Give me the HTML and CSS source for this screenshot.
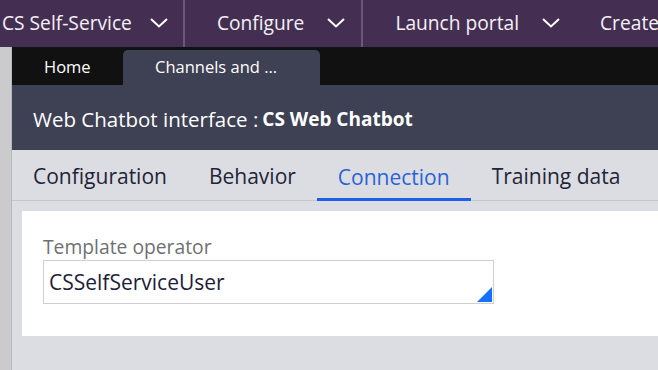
FILE: index.html
```html
<!DOCTYPE html>
<html lang="en">
<head>
    <meta charset="UTF-8">
    <title>Web Chatbot interface</title>
    <link rel="stylesheet" href="styles.css">
</head>
<body>
    <div class="topbar">
        <div class="menu-item first has-sep">
            <span class="menu-label">CS Self-Service</span>
            <svg class="chevron" viewBox="0 0 18 10" width="18" height="10"><path d="M1 1 L9 8.5 L17 1" fill="none" stroke="#ffffff" stroke-width="2"/></svg>
        </div>
        <div class="menu-item has-sep">
            <span class="menu-label">Configure</span>
            <svg class="chevron" viewBox="0 0 18 10" width="18" height="10"><path d="M1 1 L9 8.5 L17 1" fill="none" stroke="#ffffff" stroke-width="2"/></svg>
        </div>
        <div class="menu-item">
            <span class="menu-label">Launch portal</span>
            <svg class="chevron" viewBox="0 0 18 10" width="18" height="10"><path d="M1 1 L9 8.5 L17 1" fill="none" stroke="#ffffff" stroke-width="2"/></svg>
        </div>
        <div class="menu-item last">
            <span class="menu-label">Create</span>
        </div>
    </div>

    <div class="main">
        <div class="side-strip"></div>
        <div class="workspace">
            <div class="doc-tabs">
                <div class="doc-tab">Home</div>
                <div class="doc-tab active">Channels and ...</div>
            </div>

            <div class="rule-header">
                <span class="rule-type">Web Chatbot interface :</span>
                <span class="rule-name">CS Web Chatbot</span>
            </div>

            <div class="rule-tabs">
                <div class="rule-tab">Configuration</div>
                <div class="rule-tab">Behavior</div>
                <div class="rule-tab active">Connection</div>
                <div class="rule-tab">Training data</div>
            </div>

            <div class="panel-area">
                <div class="panel">
                    <div class="field-label">Template operator</div>
                    <div class="field-input">
                        CSSelfServiceUser
                        <span class="autocomplete-corner"></span>
                    </div>
                </div>
            </div>
        </div>
    </div>
</body>
</html>
```

FILE: styles.css
```css
:root {
    --purple: #442f52;
    --purple-sep: #6b577a;
    --black-bar: #111111;
    --slate: #3e4053;
    --light-gray: #dcdde2;
    --blue: #1f5ee8;
    --text-dark: #1f2437;
}

* { box-sizing: border-box; }

body {
    margin: 0;
    width: 658px;
    height: 370px;
    overflow: hidden;
    font-family: 'Open Sans', sans-serif;
    background: var(--light-gray);
}

/* --- Top menu bar --- */
.topbar {
    height: 47px;
    background: var(--purple);
    display: flex;
    align-items: stretch;
    white-space: nowrap;
    overflow: hidden;
}
.menu-item {
    display: flex;
    align-items: center;
    gap: 23px;
    padding: 0 16px 3px 32px;
    color: #f4f1f6;
    font-size: 19.2px;
}
.menu-item.first { padding-left: 2px; gap: 18px; padding-right: 15px; }
.menu-item.last { padding-left: 24px; }
.menu-item.has-sep { border-right: 2px solid var(--purple-sep); }
.chevron { display: block; margin-top: 2px; }

/* --- Main --- */
.main { display: flex; height: 323px; }
.side-strip {
    width: 12px;
    flex-shrink: 0;
    background: #cbcbce;
    border-right: 1px solid #b9b9bd;
}
.workspace { flex: 1; display: flex; flex-direction: column; min-width: 0; }

.doc-tabs {
    height: 38px;
    background: var(--black-bar);
    display: flex;
    align-items: flex-end;
}
.doc-tab {
    height: 35px;
    display: flex;
    align-items: center;
    color: #ffffff;
    font-size: 16.5px;
    padding: 0 32px 2px;
    width: 111px;
    white-space: nowrap;
}
.doc-tab.active {
    width: 197px;
    background: var(--slate);
    border-radius: 5px 5px 0 0;
}

.rule-header {
    height: 65px;
    background: var(--slate);
    color: #ffffff;
    display: flex;
    align-items: center;
    padding: 2px 21px 0;
    white-space: nowrap;
}
.rule-type { font-size: 20.5px; }
.rule-name { font-size: 19px; font-weight: 700; margin-left: 4px; }

.rule-tabs {
    height: 51px;
    display: flex;
    border-bottom: 1px solid #c6c7cc;
    white-space: nowrap;
}
.rule-tab {
    display: flex;
    align-items: center;
    padding: 2px 21px 0;
    font-size: 21px;
    color: var(--text-dark);
}
.rule-tab.active {
    color: #2a63d6;
    box-shadow: inset 0 -3px 0 var(--blue);
    margin-bottom: -1px;
}

.panel-area { padding: 10px 0 0 10px; }
.panel {
    background: #ffffff;
    height: 125px;
    padding: 24px 21px 0;
}
.field-label {
    font-size: 19.3px;
    color: #6f6f73;
    line-height: 24px;
}
.field-input {
    position: relative;
    margin-top: 1px;
    width: 451px;
    height: 44px;
    border: 1px solid #cfcfd2;
    padding: 0 5px;
    font-size: 21px;
    color: #1b1e38;
    display: flex;
    align-items: center;
}
.autocomplete-corner {
    position: absolute;
    right: 1px;
    bottom: 1px;
    width: 0;
    height: 0;
    border-left: 15px solid transparent;
    border-bottom: 15px solid #1470ff;
}
```
